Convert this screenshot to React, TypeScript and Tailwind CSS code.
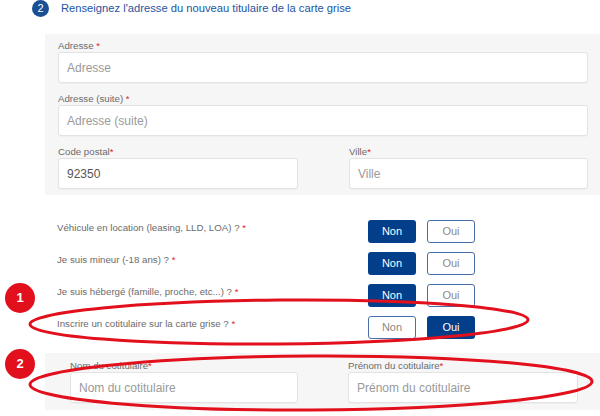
import React from "react";

const Star = () => <span className="text-[#e2231a]">*</span>;

function Field({ label, placeholder, value, className = "" }: { label: React.ReactNode; placeholder: string; value?: string; className?: string }) {
  return (
    <div className={className}>
      <div className="h-[13px] text-[9.7px] leading-[13px] text-[#6b6b6b]">{label}</div>
      <div className="flex h-[31px] items-center rounded-[3px] border border-[#e3e3e3] bg-white pl-[8px] text-[12px] shadow-[0_1px_1px_rgba(0,0,0,0.03)]">
        {value ? <span className="text-[#555]">{value}</span> : <span className="text-[#9a9a9a]">{placeholder}</span>}
      </div>
    </div>
  );
}

function Toggle({ yes }: { yes: boolean }) {
  const on = "flex h-[23px] w-[48px] items-center justify-center rounded-[3px] bg-[#023e8a] text-[11px] text-white";
  const off = "flex h-[23px] w-[48px] items-center justify-center rounded-[3px] border border-[#4a6fa8] bg-white text-[11px] text-[#8a8a8a]";
  return (
    <div className="flex gap-[11px]">
      <div className={yes ? off : on}>Non</div>
      <div className={yes ? on : off}>Oui</div>
    </div>
  );
}

function Question({ label, yes = false }: { label: string; yes?: boolean }) {
  return (
    <div className="flex h-[23px]">
      <div className="w-[311px] pt-[1px] text-[9.7px] leading-[13px] text-[#6b6b6b]">
        {label} <Star />
      </div>
      <Toggle yes={yes} />
    </div>
  );
}

export default function App() {
  return (
    <div className="relative h-[416px] w-[600px] overflow-hidden bg-white" style={{ fontFamily: '"Liberation Sans", Arial, sans-serif' }}>
      <div className="flex h-[16px] items-center pl-[32px]">
        <div className="flex h-[17px] w-[17px] items-center justify-center rounded-full bg-[#1b4f93] text-[11px] text-white">2</div>
        <div className="ml-[12px] text-[11.2px] text-[#1d55a3]">Renseignez l'adresse du nouveau titulaire de la carte grise</div>
      </div>

      <div className="ml-[45px] mt-[18px] bg-[#f6f6f6] pb-[6px] pl-[13px] pr-[12px] pt-[5px]">
        <Field label={<>Adresse <Star /></>} placeholder="Adresse" />
        <Field className="mt-[9px]" label={<>Adresse (suite) <Star /></>} placeholder="Adresse (suite)" />
        <div className="mt-[9px] flex gap-[51px]">
          <Field className="w-[240px]" label={<>Code postal<Star /></>} placeholder="Code postal" value="92350" />
          <Field className="w-[239px]" label={<>Ville<Star /></>} placeholder="Ville" />
        </div>
      </div>

      <div className="mt-[25px] flex flex-col gap-[9px] pl-[57px]">
        <Question label="Véhicule en location (leasing, LLD, LOA) ?" />
        <Question label="Je suis mineur (-18 ans) ?" />
        <Question label="Je suis hébergé (famille, proche, etc...) ?" />
        <Question label="Inscrire un cotitulaire sur la carte grise ?" yes />
      </div>

      <div className="ml-[45px] mt-[14px] flex gap-[50px] bg-[#f6f6f6] pb-[7px] pl-[25px] pt-[6px]">
        <Field className="w-[228px]" label={<>Nom du cotitulaire<Star /></>} placeholder="Nom du cotitulaire" />
        <Field className="w-[230px]" label={<>Prénom du cotitulaire<Star /></>} placeholder="Prénom du cotitulaire" />
      </div>

      <svg className="pointer-events-none absolute left-0 top-0" width="600" height="416" viewBox="0 0 600 416">
        <ellipse cx="279" cy="322" rx="249" ry="22" fill="none" stroke="#e2101c" strokeWidth="3" transform="rotate(-0.5 279 322)" />
        <ellipse cx="311" cy="383" rx="281" ry="27" fill="none" stroke="#e2101c" strokeWidth="3" transform="rotate(-0.3 311 383)" />
      </svg>

      <div className="absolute left-[5px] top-[283px] flex h-[30px] w-[30px] items-center justify-center rounded-full bg-[#e2101c] text-[13px] font-bold text-white">1</div>
      <div className="absolute left-[5px] top-[349px] flex h-[30px] w-[30px] items-center justify-center rounded-full bg-[#e2101c] text-[13px] font-bold text-white">2</div>
    </div>
  );
}
